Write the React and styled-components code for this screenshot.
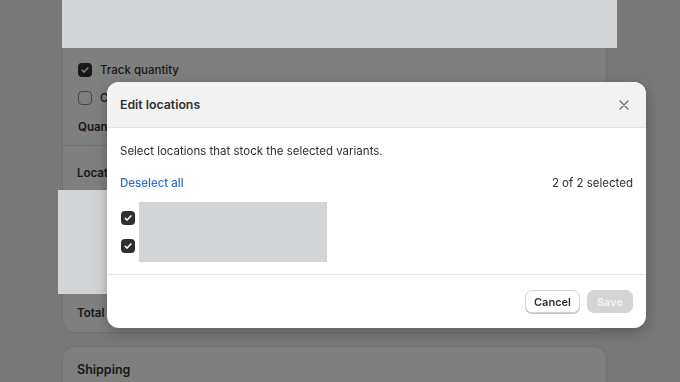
import React from "react";
import styled, { createGlobalStyle } from "styled-components";

const GlobalStyle = createGlobalStyle`
  html, body { margin: 0; padding: 0; }
  body {
    background: #f1f1f1;
    font-family: Inter, "Noto Sans", "Liberation Sans", sans-serif;
    color: #303030;
    width: 680px;
    height: 382px;
    overflow: hidden;
  }
`;

const Page = styled.div`
  display: flex;
  flex-direction: column;
  gap: 15px;
  width: 543px;
  padding-left: 63px;
`;

const Card = styled.div`
  background: #ffffff;
  border-radius: 12px;
  box-shadow: 0 0 0 1px rgba(0, 0, 0, 0.06);
`;

const Section = styled.div`
  display: flex;
  flex-direction: column;
  gap: ${(p) => p.$gap ?? 8}px;
  padding: ${(p) => p.$pad};
  border-bottom: ${(p) => (p.$divider ? "1px solid #e3e3e3" : "none")};
`;

const Row = styled.div`
  display: flex;
  align-items: center;
  gap: 8px;
  height: 20px;
  font-size: ${(p) => p.$size || 11.5}px;
  font-weight: ${(p) => (p.$bold ? 600 : 450)};
  color: #303030;
  white-space: nowrap;
`;

const Spacer = styled.div`
  height: ${(p) => p.$h}px;
`;

const Box = styled.span`
  width: 14px;
  height: 14px;
  box-sizing: border-box;
  border-radius: 4px;
  display: inline-flex;
  align-items: center;
  justify-content: center;
  flex: none;
  background: ${(p) => (p.$checked ? "#303030" : "#ffffff")};
  border: ${(p) => (p.$checked ? "none" : "1px solid #8a8a8a")};
`;

const Overlay = styled.div`
  position: fixed;
  inset: 0;
  background: rgba(0, 0, 0, 0.5);
`;

const Redaction = styled.div`
  position: fixed;
  background: #d3d4d6;
`;

const Modal = styled.div`
  position: fixed;
  left: 107px;
  top: 82px;
  width: 539px;
  background: #ffffff;
  border-radius: 12px;
  overflow: hidden;
  box-shadow: 0 4px 14px rgba(0, 0, 0, 0.28);
`;

const ModalHeader = styled.div`
  height: 46px;
  box-sizing: border-box;
  display: flex;
  align-items: center;
  justify-content: space-between;
  padding: 0 12px 0 13px;
  background: #f3f3f3;
  border-bottom: 1px solid #e3e3e3;
`;

const Title = styled.h2`
  margin: 0;
  font-size: 12.3px;
  font-weight: 600;
  color: #303030;
`;

const CloseButton = styled.button`
  width: 20px;
  height: 20px;
  padding: 0;
  border: none;
  background: transparent;
  display: flex;
  align-items: center;
  justify-content: center;
`;

const ModalBody = styled.div`
  display: flex;
  flex-direction: column;
  padding: 14px 13px 12px;
`;

const Text = styled.p`
  margin: 0;
  font-size: 11.5px;
  line-height: 18px;
  color: #303030;
`;

const Toolbar = styled.div`
  display: flex;
  align-items: center;
  justify-content: space-between;
  margin-top: 13px;
  font-size: 11.5px;
  line-height: 20px;
`;

const LinkButton = styled.span`
  color: #2c6ecb;
  font-weight: 500;
`;

const Count = styled.span`
  color: #303030;
`;

const List = styled.div`
  display: flex;
  align-items: center;
  gap: 4px;
  margin-top: 9px;
  padding-left: 1px;
`;

const Checks = styled.div`
  display: flex;
  flex-direction: column;
  gap: 14px;
`;

const Hidden = styled.div`
  width: 188px;
  height: 60px;
  background: #d3d4d6;
`;

const ModalFooter = styled.div`
  display: flex;
  justify-content: flex-end;
  align-items: center;
  gap: 7px;
  height: 54px;
  box-sizing: border-box;
  padding: 0 13px;
  border-top: 1px solid #e3e3e3;
`;

const Button = styled.button`
  height: 23px;
  padding: 0 7px;
  border-radius: 7px;
  font-family: inherit;
  font-size: 11px;
  font-weight: 600;
  ${(p) =>
    p.$disabled
      ? `background: #d4d4d4; color: #f5f5f5; border: none; min-width: 46px;`
      : `background: #ffffff; color: #303030; border: 1px solid #d4d4d4; box-shadow: 0 1px 0 #c4c4c4; min-width: 55px;`}
`;

const Check = () => (
  <svg width="10" height="10" viewBox="0 0 10 10">
    <path d="M2.2 5.3 L4.1 7.1 L7.9 2.9" fill="none" stroke="#fff" strokeWidth="1.5" strokeLinecap="round" strokeLinejoin="round" />
  </svg>
);

const CloseIcon = () => (
  <svg width="10" height="10" viewBox="0 0 10 10">
    <path d="M1 1 L9 9 M9 1 L1 9" stroke="#6b6b6b" strokeWidth="1.3" strokeLinecap="round" />
  </svg>
);

export default function App() {
  return (
    <>
      <GlobalStyle />
      <Page>
        <Card>
          <Section $pad="60px 15px 8px" $divider>
            <Row>
              <Box $checked>
                <Check />
              </Box>
              Track quantity
            </Row>
            <Row>
              <Box />
              Continue selling when out of stock
            </Row>
            <Row $bold style={{ marginTop: 1 }}>Quantity</Row>
          </Section>
          <Section $pad="17px 14px 9px" $gap={0}>
            <Row $bold>Location</Row>
            <Spacer $h={120} />
            <Row $bold>Total</Row>
          </Section>
        </Card>
        <Card>
          <Section $pad="12px 14px 20px">
            <Row $bold $size={12.5}>Shipping</Row>
          </Section>
        </Card>
      </Page>
      <Overlay />
      <Redaction style={{ left: 62, top: 0, width: 555, height: 48 }} />
      <Redaction style={{ left: 58, top: 190, width: 60, height: 104 }} />
      <Modal>
        <ModalHeader>
          <Title>Edit locations</Title>
          <CloseButton aria-label="Close">
            <CloseIcon />
          </CloseButton>
        </ModalHeader>
        <ModalBody>
          <Text>Select locations that stock the selected variants.</Text>
          <Toolbar>
            <LinkButton>Deselect all</LinkButton>
            <Count>2 of 2 selected</Count>
          </Toolbar>
          <List>
            <Checks>
              <Box $checked>
                <Check />
              </Box>
              <Box $checked>
                <Check />
              </Box>
            </Checks>
            <Hidden />
          </List>
        </ModalBody>
        <ModalFooter>
          <Button>Cancel</Button>
          <Button $disabled>Save</Button>
        </ModalFooter>
      </Modal>
    </>
  );
}
